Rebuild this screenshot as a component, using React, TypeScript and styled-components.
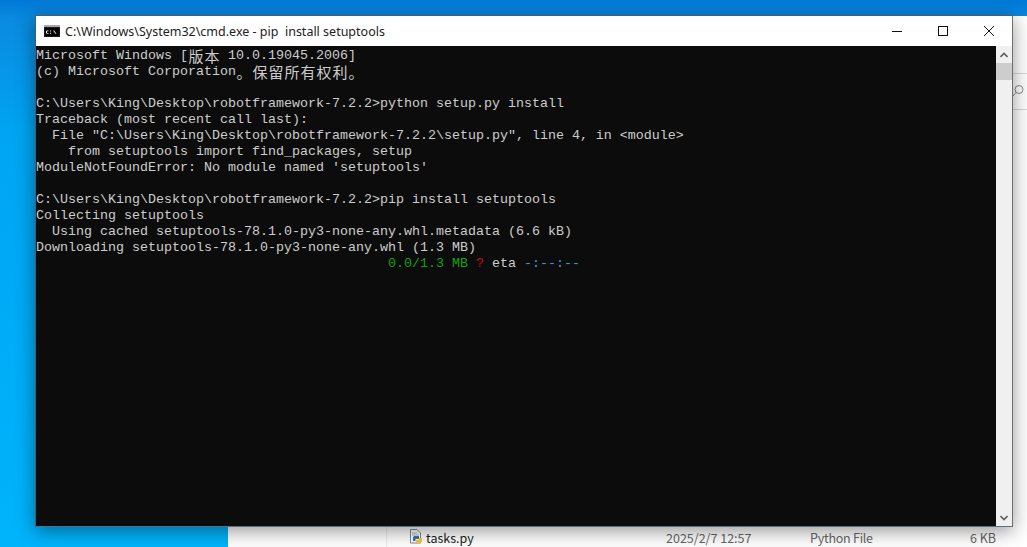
import React from "react";
import styled, { createGlobalStyle } from "styled-components";

const Global = createGlobalStyle`
  html, body { margin: 0; padding: 0; width: 1027px; height: 547px; overflow: hidden; }
`;

const Desktop = styled.div`
  position: relative;
  width: 1027px;
  height: 547px;
  overflow: hidden;
  background: linear-gradient(180deg, #0078d7 0px, #0a8ae0 18px, #00a4f2 130px, #00b4fc 547px);
`;

const Explorer = styled.div`
  position: absolute;
  left: 228px;
  top: 16px;
  width: 799px;
  height: 531px;
  background: #ffffff;
  display: flex;
  flex-direction: column;
  justify-content: flex-end;
`;

const ExplorerRow = styled.div`
  display: grid;
  grid-template-columns: 181px 17px 240px 144px 126px 60px;
  align-items: center;
  height: 20px;
  font: 12.5px "Noto Sans CJK SC", "Noto Sans", sans-serif;
  color: #666;
`;

const FileName = styled.div`
  color: #222;
  font-size: 12.5px;
`;
const IconCell = styled.div`
  display: flex;
  margin-top: -1px;
`;
const Cell = styled.div<{ $right?: boolean; $tight?: boolean }>`
  white-space: nowrap;
  text-align: ${(p) => (p.$right ? "right" : "left")};
  letter-spacing: ${(p) => (p.$tight ? "-0.25px" : "0")};
`;

const SearchMark = styled.svg`
  position: absolute;
  left: 784px;
  top: 68px;
`;
const ExplorerLine = styled.div<{ $top: number }>`
  position: absolute;
  left: 785px;
  right: 0;
  top: ${(p) => p.$top}px;
  height: 1px;
  background: #d9d9d9;
`;
const ColumnDivider = styled.div`
  position: absolute;
  left: 158px;
  bottom: 0;
  width: 1px;
  height: 20px;
  background: #eeeeee;
`;

const Cmd = styled.div`
  position: absolute;
  left: 35px;
  top: 15px;
  width: 978px;
  height: 512px;
  display: flex;
  flex-direction: column;
  border: 1px solid #3d5f78;
  border-right-color: #6f6f6f;
  border-bottom-color: #5e6e78;
  box-sizing: border-box;
  background: #fff;
  box-shadow: 0 4px 18px rgba(0, 0, 0, 0.42);
`;

const TitleBar = styled.div`
  height: 30px;
  flex: none;
  display: flex;
  align-items: center;
  background: #fff;
  padding-left: 8px;
`;

const Title = styled.div`
  flex: 1;
  margin-left: 5px;
  font: 12.5px "Noto Sans", "Noto Sans CJK SC", sans-serif;
  color: #222;
  white-space: pre;
`;

const Controls = styled.div`
  display: flex;
  height: 30px;
`;

const Control = styled.div`
  width: 46px;
  height: 30px;
  display: flex;
  align-items: center;
  justify-content: center;
`;

const Body = styled.div`
  flex: 1;
  min-height: 0;
  display: flex;
`;

const Terminal = styled.div`
  flex: 1;
  min-width: 0;
  background: #0c0c0c;
  color: #cccccc;
  padding-top: 2px;
  font: 13.333px/16px "Liberation Mono", monospace;
  white-space: pre;
`;

const Line = styled.div`
  height: 16px;
  overflow: visible;
`;

const Cjk = styled.span`
  font: 400 15px/15px "Noto Sans CJK SC", sans-serif;
  display: inline-block;
  width: 16px;
  text-align: center;
  vertical-align: top;
`;

const Colored = styled.span<{ $c: string }>`
  color: ${(p) => p.$c};
`;

const ScrollBar = styled.div`
  width: 16px;
  flex: none;
  background: #f0f0f0;
  display: flex;
  flex-direction: column;
`;

const ScrollArrow = styled.div`
  height: 17px;
  flex: none;
  display: flex;
  align-items: center;
  justify-content: center;
`;

const ScrollThumb = styled.div`
  height: 17px;
  flex: none;
  background: #cdcdcd;
`;

const ScrollTrack = styled.div`
  flex: 1;
`;

const ConsoleIcon = () => (
  <svg width="16" height="12" viewBox="0 0 16 12">
    <rect x="0" y="0" width="16" height="12" fill="#1a1a1a" />
    <rect x="0" y="0" width="16" height="2" fill="#a8a8a8" />
    <rect x="1" y="3" width="14" height="8" fill="#000" />
    <path d="M2.500 5.500h2v.8h-2zM2.500 8h2v.8h-2zM2 6h1v2H2zM6 5.500h1v1H6zM6 7.800h1v1H6zM9 5.500l1 0 2.500 3.300h-1z" fill="#fff" />
  </svg>
);

const PyIcon = () => (
  <svg width="14" height="15" viewBox="0 0 14 15">
    <path d="M1.500 .5H8L11.500 4V14H1.500Z" fill="#fff" stroke="#7d8a99" />
    <path d="M3 4h5M3 6h7" stroke="#a8b6c4" />
    <path d="M5 7h5v3H6.500v2H4V8.500Z" fill="#3a75a8" />
    <path d="M7 11h3V9h3v3.500L11 14.500H7Z" fill="#f2c83a" />
  </svg>
);

const rows: React.ReactNode[] = [
  <>
    {"Microsoft Windows ["}
    <Cjk>版</Cjk>
    <Cjk>本</Cjk>
    {" 10.0.19045.2006]"}
  </>,
  <>
    {"(c) Microsoft Corporation"}
    <Cjk>。</Cjk>
    <Cjk>保</Cjk>
    <Cjk>留</Cjk>
    <Cjk>所</Cjk>
    <Cjk>有</Cjk>
    <Cjk>权</Cjk>
    <Cjk>利</Cjk>
    <Cjk>。</Cjk>
  </>,
  "",
  "C:\\Users\\King\\Desktop\\robotframework-7.2.2>python setup.py install",
  "Traceback (most recent call last):",
  '  File "C:\\Users\\King\\Desktop\\robotframework-7.2.2\\setup.py", line 4, in <module>',
  "    from setuptools import find_packages, setup",
  "ModuleNotFoundError: No module named 'setuptools'",
  "",
  "C:\\Users\\King\\Desktop\\robotframework-7.2.2>pip install setuptools",
  "Collecting setuptools",
  "  Using cached setuptools-78.1.0-py3-none-any.whl.metadata (6.6 kB)",
  "Downloading setuptools-78.1.0-py3-none-any.whl (1.3 MB)",
  <>
    {" ".repeat(44)}
    <Colored $c="#13a10e">0.0/1.3 MB</Colored> <Colored $c="#c50f1f">?</Colored> eta{" "}
    <Colored $c="#3a96dd">-:--:--</Colored>
  </>,
];

export default function App() {
  return (
    <Desktop>
      <Global />
      <Explorer>
        <ExplorerRow>
          <span />
          <IconCell>
            <PyIcon />
          </IconCell>
          <FileName>tasks.py</FileName>
          <Cell>2025/2/7 12:57</Cell>
          <Cell $tight>Python File</Cell>
          <Cell $right>6 KB</Cell>
        </ExplorerRow>
        <ColumnDivider />
        <ExplorerLine $top={57} />
        <ExplorerLine $top={93} />
        <SearchMark width="12" height="14" viewBox="0 0 12 14">
          <circle cx="7" cy="5.500" r="4" fill="none" stroke="#888" />
          <path d="M4 8.500L1 12" stroke="#888" />
        </SearchMark>
      </Explorer>
      <Cmd>
        <TitleBar>
          <ConsoleIcon />
          <Title>{"C:\\Windows\\System32\\cmd.exe - pip  install setuptools"}</Title>
          <Controls>
            <Control>
              <svg width="10" height="10" viewBox="0 0 10 10">
                <path d="M0 5.500H10" stroke="#111" />
              </svg>
            </Control>
            <Control>
              <svg width="10" height="10" viewBox="0 0 10 10">
                <rect x=".5" y=".5" width="9" height="9" fill="none" stroke="#111" />
              </svg>
            </Control>
            <Control>
              <svg width="10" height="10" viewBox="0 0 10 10">
                <path d="M0 0L10 10M10 0L0 10" stroke="#111" />
              </svg>
            </Control>
          </Controls>
        </TitleBar>
        <Body>
          <Terminal>
            {rows.map((r, i) => (
              <Line key={i}>{r}</Line>
            ))}
          </Terminal>
          <ScrollBar>
            <ScrollArrow>
              <svg width="8" height="6" viewBox="0 0 8 6">
                <path d="M.5 5L4 1.500L7.500 5" fill="none" stroke="#606060" strokeWidth="1.600" />
              </svg>
            </ScrollArrow>
            <ScrollThumb />
            <ScrollTrack />
            <ScrollArrow>
              <svg width="8" height="6" viewBox="0 0 8 6">
                <path d="M.5 1L4 4.500L7.500 1" fill="none" stroke="#606060" strokeWidth="1.600" />
              </svg>
            </ScrollArrow>
          </ScrollBar>
        </Body>
      </Cmd>
    </Desktop>
  );
}
